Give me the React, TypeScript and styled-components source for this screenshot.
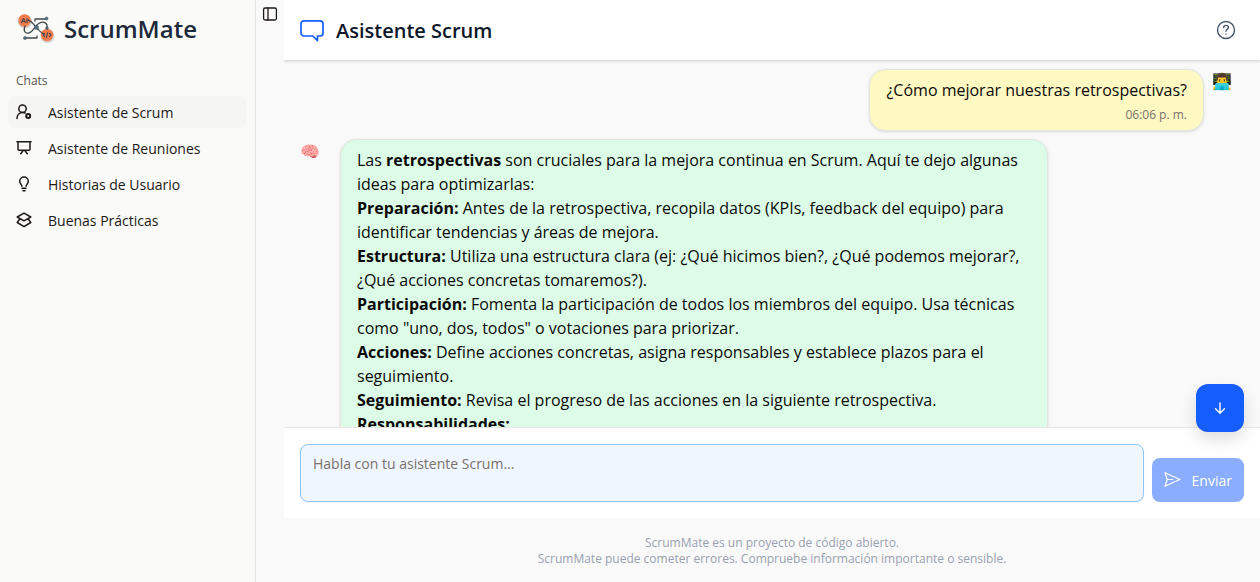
import React, { ReactNode } from "react";
import styled, { createGlobalStyle } from "styled-components";

const GlobalStyle = createGlobalStyle`
  *, *::before, *::after { box-sizing: border-box; }
  body { margin: 0; background: #f9f9f9; color: #0c0a09; font-family: "Open Sans", "Noto Sans", sans-serif; }
  button, textarea { font: inherit; }
  button { cursor: pointer; }
  h1, h2, p, ul { margin: 0; padding: 0; }
  svg { display: block; flex: none; }
`;

const Shell = styled.div`
  display: flex;
  height: 100vh;
  overflow: hidden;
`;

const Sidebar = styled.aside`
  width: 256px;
  flex: none;
  padding: 8px;
  background: #fafaf9;
  border-right: 1px solid #e5e5e5;
`;

const Brand = styled.a`
  display: flex;
  align-items: center;
  gap: 8px;
  height: 42px;
  padding: 0 8px;
  color: #1e293b;
  text-decoration: none;
  font-size: 24px;
  line-height: 32px;
  font-weight: 600;
`;

const NavLabel = styled.h2`
  padding: 16px 8px 0;
  font-size: 12px;
  line-height: 30px;
  font-weight: 400;
  color: #57534e;
`;

const NavList = styled.ul`
  display: flex;
  flex-direction: column;
  gap: 4px;
  list-style: none;
`;

const NavLink = styled.a<{ $active?: boolean }>`
  display: flex;
  align-items: center;
  gap: 16px;
  height: 32px;
  padding: 0 8px;
  border-radius: 8px;
  color: #1c1917;
  background: ${(p) => (p.$active ? "#f5f5f4" : "transparent")};
  font-size: 14px;
  line-height: 20px;
  text-decoration: none;
`;

const ButtonText = styled.span`
  padding-top: 2px;
`;

const Rail = styled.div`
  width: 28px;
  flex: none;
`;

const IconButton = styled.button<{ $size: number; $color: string }>`
  display: grid;
  place-items: center;
  width: ${(p) => p.$size}px;
  height: ${(p) => p.$size}px;
  padding: 0;
  border: 0;
  background: none;
  color: ${(p) => p.$color};
`;

const Main = styled.main`
  display: flex;
  flex: 1;
  min-width: 0;
  flex-direction: column;
`;

const Header = styled.header`
  display: flex;
  align-items: center;
  gap: 12px;
  height: 60px;
  flex: none;
  padding: 0 16px;
  background: #fff;
  box-shadow: 0 1px 3px rgba(0, 0, 0, 0.2);
  clip-path: inset(0 0 -6px 0);
  z-index: 1;
`;

const Title = styled.h1`
  flex: 1;
  padding-top: 2px;
  font-size: 20px;
  line-height: 28px;
  font-weight: 600;
  color: #0f172a;
`;

const Messages = styled.section`
  display: flex;
  flex: 1;
  min-height: 0;
  flex-direction: column;
  gap: 8px;
  padding: 9px 16px 0;
  overflow: hidden;
`;

const Message = styled.article<{ $own?: boolean }>`
  display: flex;
  flex: none;
  flex-direction: ${(p) => (p.$own ? "row-reverse" : "row")};
  align-items: flex-start;
  padding-right: ${(p) => (p.$own ? "12px" : "0")};
`;

const Avatar = styled.span<{ $own?: boolean }>`
  width: ${(p) => (p.$own ? "28px" : "40px")};
  padding-left: ${(p) => (p.$own ? "8px" : "0")};
  font-size: 16px;
  line-height: 24px;
`;

const Bubble = styled.div<{ $own?: boolean }>`
  max-width: 75%;
  padding: 8px 16px;
  border: 1px solid #e2e5e2;
  border-radius: 16px;
  background: ${(p) => (p.$own ? "#fef8c2" : "#dcfce7")};
  box-shadow: 0 1px 3px rgba(0, 0, 0, 0.12);
  font-size: 16px;
  line-height: 24px;
`;

const Time = styled.time`
  display: block;
  padding-top: 5px;
  text-align: right;
  font-size: 12px;
  line-height: 15px;
  color: #78716c;
`;

const Composer = styled.form`
  position: relative;
  display: flex;
  flex: none;
  align-items: flex-end;
  gap: 8px;
  padding: 16px;
  background: #fff;
  border-top: 1px solid #e5e5e5;
`;

const Input = styled.textarea`
  flex: 1;
  min-width: 0;
  height: 58px;
  padding: 9px 12px;
  border: 1px solid #8ec5ff;
  border-radius: 8px;
  background: #eff6ff;
  box-shadow: 0 1px 2px rgba(0, 0, 0, 0.06);
  font-size: 14px;
  line-height: 20px;
  resize: none;
  &::placeholder { color: #79716b; }
`;

const SendButton = styled.button`
  display: flex;
  align-items: center;
  gap: 8px;
  height: 44px;
  padding: 0 12px;
  border: 0;
  border-radius: 8px;
  background: #8aadff;
  color: #fff;
  font-size: 14px;
  line-height: 20px;
`;

const ScrollButton = styled.button`
  position: absolute;
  right: 16px;
  top: -44px;
  display: grid;
  place-items: center;
  width: 48px;
  height: 48px;
  padding: 0;
  border: 0;
  border-radius: 12px;
  background: #155dfc;
  color: #fff;
  box-shadow: 0 8px 16px rgba(0, 0, 0, 0.12);
`;

const Footer = styled.footer`
  flex: none;
  padding: 17px 16px 15px;
  text-align: center;
  font-size: 12px;
  line-height: 16px;
  color: #99a1af;
`;

interface IconProps {
  size?: number;
  weight?: number;
  children: ReactNode;
}

const Icon = ({ size = 16, weight = 1.5, children }: IconProps) => (
  <svg
    width={size}
    height={size}
    viewBox={`0 0 ${size} ${size}`}
    fill="none"
    stroke="currentColor"
    strokeWidth={weight}
    strokeLinecap="round"
    strokeLinejoin="round"
    aria-hidden="true"
  >
    {children}
  </svg>
);

const Logo = () => (
  <svg width="40" height="32" viewBox="0 0 40 32" fill="none" aria-hidden="true">
    <g fill="#d6d3d1">
      <circle cx="9" cy="8.5" r="7" />
      <circle cx="31.5" cy="23" r="7" />
    </g>
    <circle cx="8.5" cy="7.5" r="6.2" fill="#f47b4b" />
    <circle cx="31" cy="22" r="6.2" fill="#f47b4b" />
    <g stroke="#44484c" strokeWidth="1.3" strokeLinecap="round" strokeLinejoin="round">
      <path d="M12 7c4 1 5 4 8 7s5 6 8 7" />
      <path d="M9 13c-2 5 0 8 4 7s5-6 9-9 8-2 9 1v4" />
      <path d="M19 8V6h10M21 23v2H10" />
      <path d="M5.500 9.500l2-4 2 4M6.200 8.500h2.600M11 5.500v4" strokeWidth="1.1" />
      <path d="M28.500 20.500l-1.500 1.500 1.500 1.500M33.500 20.500l1.500 1.500-1.500 1.500M31.800 19.500l-1.500 5" strokeWidth="1.1" />
    </g>
    <g fill="#4d7c8a" stroke="#44484c" strokeWidth="0.6">
      <circle cx="30.5" cy="5.5" r="1.5" />
      <circle cx="9" cy="25" r="1.5" />
      <circle cx="20.5" cy="14.5" r="2" />
      <circle cx="31" cy="15" r="1.3" />
    </g>
  </svg>
);

const navItems = [
  {
    label: "Asistente de Scrum",
    icon: (
      <Icon>
        <circle cx="6.5" cy="4.7" r="3.7" />
        <path d="M1 14.500c0-3 2-5.600 5-6 1.200-.2 2.300 0 3.200.5" />
        <circle cx="12.2" cy="12" r="2" strokeWidth="2" />
      </Icon>
    ),
  },
  {
    label: "Asistente de Reuniones",
    icon: (
      <Icon>
        <path d="M1 1.700h14M2 1.700v7.600c0 .7.400 1 1 1h10c.600 0 1-.3 1-1V1.700M7.200 10.500 4.700 13.800M8.800 10.500l2.500 3.300" />
      </Icon>
    ),
  },
  {
    label: "Historias de Usuario",
    icon: (
      <Icon>
        <path d="M5.900 10.200c0-1.600-2.200-2.300-2.200-5a4.300 4.300 0 0 1 8.600 0c0 2.700-2.200 3.400-2.200 5M6 12.300h4M7 14.700h2" />
      </Icon>
    ),
  },
  {
    label: "Buenas Prácticas",
    icon: (
      <Icon>
        <path d="M8 1.200 14.800 5 8 8.800 1.200 5zM3.500 7.500 1.200 10.500 8 14.600l6.800-4.100-2.300-3" />
      </Icon>
    ),
  },
];

const tips = [
  {
    title: "Preparación:",
    text: "Antes de la retrospectiva, recopila datos (KPIs, feedback del equipo) para identificar tendencias y áreas de mejora.",
  },
  {
    title: "Estructura:",
    text: "Utiliza una estructura clara (ej: ¿Qué hicimos bien?, ¿Qué podemos mejorar?, ¿Qué acciones concretas tomaremos?).",
  },
  {
    title: "Participación:",
    text: 'Fomenta la participación de todos los miembros del equipo. Usa técnicas como "uno, dos, todos" o votaciones para priorizar.',
  },
  {
    title: "Acciones:",
    text: "Define acciones concretas, asigna responsables y establece plazos para el seguimiento.",
  },
  {
    title: "Seguimiento:",
    text: "Revisa el progreso de las acciones en la siguiente retrospectiva.",
  },
  { title: "Responsabilidades:", text: "" },
];

export default function App() {
  return (
    <Shell>
      <GlobalStyle />
      <Sidebar>
        <Brand href="#">
          <Logo />
          ScrumMate
        </Brand>
        <NavLabel>Chats</NavLabel>
        <nav>
          <NavList>
            {navItems.map((item, i) => (
              <li key={item.label}>
                <NavLink href="#" $active={i === 0}>
                  {item.icon}
                  <ButtonText>{item.label}</ButtonText>
                </NavLink>
              </li>
            ))}
          </NavList>
        </nav>
      </Sidebar>
      <Rail>
        <IconButton type="button" $size={28} $color="#1c1917" aria-label="Alternar barra lateral">
          <Icon weight={1.3}>
            <rect x="1.6" y="2" width="12.8" height="12" rx="1.5" />
            <path d="M6 2v12" />
          </Icon>
        </IconButton>
      </Rail>
      <Main>
        <Header>
          <IconButton as="span" $size={24} $color="#155dfc">
            <Icon size={24} weight={1.7}>
              <path d="M4 2.800h16a3 3 0 0 1 3 3v9.200a3 3 0 0 1-3 3h-2.500v4.700l-4.700-4.700H4a3 3 0 0 1-3-3V5.800a3 3 0 0 1 3-3z" />
            </Icon>
          </IconButton>
          <Title>Asistente Scrum</Title>
          <IconButton type="button" $size={36} $color="#475569" aria-label="Ayuda">
            <Icon size={20} weight={1.4}>
              <circle cx="10" cy="10" r="8.5" />
              <path d="M7.600 7.600c.1-1.400 1.100-2.200 2.400-2.200s2.400.8 2.400 2.100c0 1.800-2.400 1.900-2.400 3.700M10 13.900v.2" />
            </Icon>
          </IconButton>
        </Header>
        <Messages>
          <Message $own>
            <Avatar $own>👨‍💻</Avatar>
            <Bubble $own>
              <p>¿Cómo mejorar nuestras retrospectivas?</p>
              <Time>06:06 p. m.</Time>
            </Bubble>
          </Message>
          <Message>
            <Avatar>🧠</Avatar>
            <Bubble>
              <p>
                Las <strong>retrospectivas</strong> son cruciales para la mejora continua en Scrum. Aquí te dejo
                algunas ideas para optimizarlas:
              </p>
              {tips.map((tip) => (
                <p key={tip.title}>
                  <strong>{tip.title}</strong> {tip.text}
                </p>
              ))}
            </Bubble>
          </Message>
        </Messages>
        <Composer>
          <ScrollButton type="button" aria-label="Ir al final">
            <Icon weight={1.4}>
              <path d="M8 3v10M3.500 8.700 8 13.200l4.500-4.500" />
            </Icon>
          </ScrollButton>
          <Input aria-label="Mensaje" placeholder="Habla con tu asistente Scrum..." />
          <SendButton type="button">
            <Icon size={20} weight={1.2}>
              <path d="M3.200 9.500 1 2.700 15.800 9.500 1 16.300zM3.200 9.500h5.500" />
            </Icon>
            <ButtonText>Enviar</ButtonText>
          </SendButton>
        </Composer>
        <Footer>
          <p>ScrumMate es un proyecto de código abierto.</p>
          <p>ScrumMate puede cometer errores. Compruebe información importante o sensible.</p>
        </Footer>
      </Main>
    </Shell>
  );
}
